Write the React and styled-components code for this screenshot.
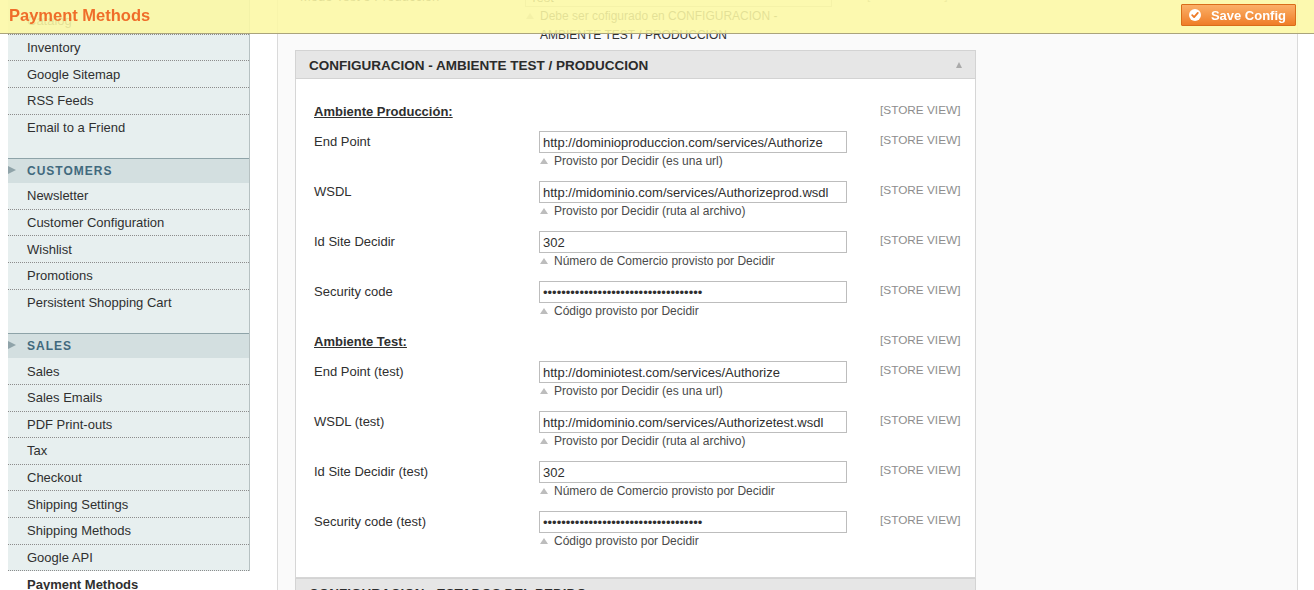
import React from 'react';
import styled, { createGlobalStyle } from 'styled-components';

const Global = createGlobalStyle`
  html, body { margin: 0; padding: 0; background: #fff; }
  body {
    font-family: "Liberation Sans", Arial, Helvetica, sans-serif;
    font-size: 13px;
    color: #2f2f2f;
    overflow: hidden;
  }
  * { box-sizing: border-box; }
`;

/* ---------- sticky header ---------- */
const HeadBar = styled.header`
  position: fixed;
  top: 0;
  left: 0;
  right: 0;
  height: 34px;
  z-index: 10;
  display: flex;
  justify-content: space-between;
  align-items: flex-start;
  padding: 0 18px 0 9px;
  background: rgba(252, 248, 164, 0.88);
  border-bottom: 1px solid #aaa47c;
`;
const PageTitle = styled.h3`
  margin: 5px 0 0;
  font-size: 16.5px;
  line-height: 20px;
  font-weight: bold;
  color: #ef6d2a;
`;
const SaveButton = styled.button`
  margin-top: 4px;
  height: 22px;
  display: inline-flex;
  align-items: center;
  gap: 10px;
  padding: 0 9px 0 7px;
  border: 1px solid #d96d1a;
  border-radius: 1px;
  background: linear-gradient(#fbb068, #ef7d27);
  color: #fff;
  font-family: "Liberation Sans", Arial, sans-serif;
  font-weight: bold;
  font-size: 13px;
  cursor: pointer;
`;

/* ---------- layout ---------- */
const Page = styled.div`
  display: flex;
  height: 590px;
  overflow: hidden;
  padding-left: 8px;
`;

/* ---------- sidebar ---------- */
const Sidebar = styled.aside`
  width: 242px;
  flex: none;
  padding-top: 8px;
  background: #e7efef;
  border-right: 1px solid #b6c1c2;
`;
const Group = styled.ul`
  list-style: none;
  margin: 0 0 17px;
  padding: 0;
`;
const GroupHead = styled.li`
  position: relative;
  height: 25px;
  display: flex;
  align-items: center;
  padding-left: 19px;
  background: #d3dfe0;
  border-top: 1px solid #8ea3a8;
  color: #41697d;
  font-size: 12px;
  font-weight: bold;
  letter-spacing: 1px;
  &::before {
    content: '';
    position: absolute;
    left: 0;
    top: 7px;
    border-left: 8px solid #8fa3a9;
    border-top: 4.5px solid transparent;
    border-bottom: 4.5px solid transparent;
  }
`;
const Item = styled.li`
  height: 26.625px;
  display: flex;
  align-items: center;
  padding-left: 19px;
  border-bottom: 1px dotted ${p => (p.$last ? 'transparent' : '#8c8c8c')};
  font-size: 13px;
  color: #2f2f2f;
  font-weight: ${p => (p.$active ? 'bold' : 'normal')};
  background: ${p => (p.$active ? '#fff' : 'transparent')};
  margin-right: ${p => (p.$active ? '-1px' : '0')};
  position: relative;
`;

/* ---------- main ---------- */
const Main = styled.main`
  margin-left: 27px;
  width: 1021px;
  flex: none;
  background: #fafafa;
  border-left: 1px solid #dadada;
  border-right: 1px solid #dadada;
  padding-left: 17px;
`;

const PrevRow = styled.div`
  margin: -13px 0 0 5px;
  display: grid;
  grid-template-columns: 225px 307px 35px auto;
`;
const PrevLabel = styled.div`
  padding-top: 2px;
  line-height: 16px;
  font-size: 13px;
`;
const Select = styled.div`
  height: 20px;
  border: 1px solid #c4c4c4;
  background: #fff;
  padding: 2px 4px;
  line-height: 15px;
  font-size: 13px;
  position: relative;
  &::after {
    content: '';
    position: absolute;
    right: 6px;
    top: 7px;
    border-left: 4px solid transparent;
    border-right: 4px solid transparent;
    border-top: 4px solid #999;
  }
`;
const PrevNote = styled.div`
  display: flex;
  align-items: flex-start;
  font-size: 12px;
  line-height: 19px;
  color: #333;
`;
const PrevMark = styled.span`
  flex: none;
  width: 0;
  height: 0;
  margin: 6px 6px 0 1px;
  border-left: 4px solid transparent;
  border-right: 4px solid transparent;
  border-bottom: 6px solid #bdbdbd;
`;
const Scope = styled.div`
  padding-top: 2px;
  font-size: 11.8px;
  line-height: 14px;
  color: #8d8d8d;
  white-space: nowrap;
`;

const Box = styled.section`
  width: 681px;
  margin-top: ${p => p.$mt || 0}px;
`;
const BoxHead = styled.div`
  height: 29px;
  display: flex;
  align-items: center;
  justify-content: space-between;
  padding: 1px 13px 0 13px;
  background: #e6e6e6;
  border: 1px solid #d3d3d3;
`;
const BoxTitle = styled.h4`
  margin: 0;
  font-size: 13.5px;
  font-weight: bold;
  color: #2b2b2b;
`;
const Toggle = styled.span`
  width: 0;
  height: 0;
  border-left: 3.5px solid transparent;
  border-right: 3.5px solid transparent;
  border-bottom: 6px solid #aaa;
`;
const BoxBody = styled.div`
  background: #fff;
  border: 1px solid #d6d6d6;
  border-top: none;
  padding: 22px 0 16px 18px;
`;
const Row = styled.div`
  display: grid;
  grid-template-columns: 225px 308px 33px auto;
  height: ${p => (p.$heading ? 30 : 50)}px;
`;
const Label = styled.div`
  padding-top: 3px;
  line-height: 16px;
  font-size: 13px;
  color: #2f2f2f;
`;
const Heading = styled(Label)`
  font-weight: bold;
  text-decoration: underline;
`;
const Field = styled.input`
  display: block;
  width: 308px;
  height: 22px;
  margin: 0;
  padding: 0 3px;
  border: 1px solid #bdbdbd;
  background: #fff;
  font-family: "Liberation Sans", Arial, sans-serif;
  font-size: 13px;
  color: #2f2f2f;
  outline: none;
`;
const Note = styled.div`
  display: flex;
  align-items: center;
  margin-top: 1px;
  font-size: 12px;
  line-height: 15px;
  color: #4a4a4a;
`;
const NoteMark = styled.span`
  flex: none;
  width: 0;
  height: 0;
  margin: 0 6px 1px 1px;
  border-left: 4px solid transparent;
  border-right: 4px solid transparent;
  border-bottom: 6px solid #bdbdbd;
`;

const CheckIcon = () => (
  <svg width="12" height="12" viewBox="0 0 12 12">
    <circle cx="6" cy="6" r="6" fill="#fff" />
    <path d="M3.2 6.2 L5.1 8.1 L8.8 3.9" fill="none" stroke="#ee7b27" strokeWidth="1.8" strokeLinecap="round" strokeLinejoin="round" />
  </svg>
);

const catalog = ['Catalog', 'Inventory', 'Google Sitemap', 'RSS Feeds', 'Email to a Friend'];
const customers = ['Newsletter', 'Customer Configuration', 'Wishlist', 'Promotions', 'Persistent Shopping Cart'];
const sales = ['Sales', 'Sales Emails', 'PDF Print-outs', 'Tax', 'Checkout', 'Shipping Settings', 'Shipping Methods', 'Google API', 'Payment Methods'];

const PASS = '•'.repeat(35);

const fields = [
  { heading: 'Ambiente Producción:' },
  { label: 'End Point', value: 'http://dominioproduccion.com/services/Authorize', note: 'Provisto por Decidir (es una url)' },
  { label: 'WSDL', value: 'http://midominio.com/services/Authorizeprod.wsdl', note: 'Provisto por Decidir (ruta al archivo)' },
  { label: 'Id Site Decidir', value: '302', note: 'Número de Comercio provisto por Decidir' },
  { label: 'Security code', value: PASS, password: true, note: 'Código provisto por Decidir' },
  { heading: 'Ambiente Test:' },
  { label: 'End Point (test)', value: 'http://dominiotest.com/services/Authorize', note: 'Provisto por Decidir (es una url)' },
  { label: 'WSDL (test)', value: 'http://midominio.com/services/Authorizetest.wsdl', note: 'Provisto por Decidir (ruta al archivo)' },
  { label: 'Id Site Decidir (test)', value: '302', note: 'Número de Comercio provisto por Decidir' },
  { label: 'Security code (test)', value: PASS, password: true, note: 'Código provisto por Decidir' },
];

export default function App() {
  return (
    <>
      <Global />
      <HeadBar>
        <PageTitle>Payment Methods</PageTitle>
        <SaveButton type="button">
          <CheckIcon />
          Save Config
        </SaveButton>
      </HeadBar>
      <Page>
        <Sidebar>
          <Group>
            {catalog.map((t, i) => (
              <Item key={t} $last={i === catalog.length - 1}>{t}</Item>
            ))}
          </Group>
          <Group>
            <GroupHead>CUSTOMERS</GroupHead>
            {customers.map((t, i) => (
              <Item key={t} $last={i === customers.length - 1}>{t}</Item>
            ))}
          </Group>
          <Group>
            <GroupHead>SALES</GroupHead>
            {sales.map(t => (
              <Item key={t} $active={t === 'Payment Methods'} $last={t === 'Payment Methods'}>{t}</Item>
            ))}
          </Group>
        </Sidebar>
        <Main>
          <PrevRow>
            <PrevLabel>Modo Test o Produccion</PrevLabel>
            <div>
              <Select>Test</Select>
              <PrevNote>
                <PrevMark />
                <span>Debe ser cofigurado en CONFIGURACION -<br />AMBIENTE TEST / PRODUCCION</span>
              </PrevNote>
            </div>
            <div />
            <Scope>[STORE VIEW]</Scope>
          </PrevRow>
          <Box $mt={5}>
            <BoxHead>
              <BoxTitle>CONFIGURACION - AMBIENTE TEST / PRODUCCION</BoxTitle>
              <Toggle />
            </BoxHead>
            <BoxBody>
              {fields.map((f, i) =>
                f.heading ? (
                  <Row key={i} $heading>
                    <Heading>{f.heading}</Heading>
                    <div />
                    <div />
                    <Scope>[STORE VIEW]</Scope>
                  </Row>
                ) : (
                  <Row key={i}>
                    <Label>{f.label}</Label>
                    <div>
                      <Field readOnly type={f.password ? 'password' : 'text'} value={f.value} />
                      <Note><NoteMark />{f.note}</Note>
                    </div>
                    <div />
                    <Scope>[STORE VIEW]</Scope>
                  </Row>
                )
              )}
            </BoxBody>
          </Box>
          <Box>
            <BoxHead>
              <BoxTitle>CONFIGURACION - ESTADOS DEL PEDIDO</BoxTitle>
              <Toggle />
            </BoxHead>
          </Box>
        </Main>
      </Page>
    </>
  );
}
